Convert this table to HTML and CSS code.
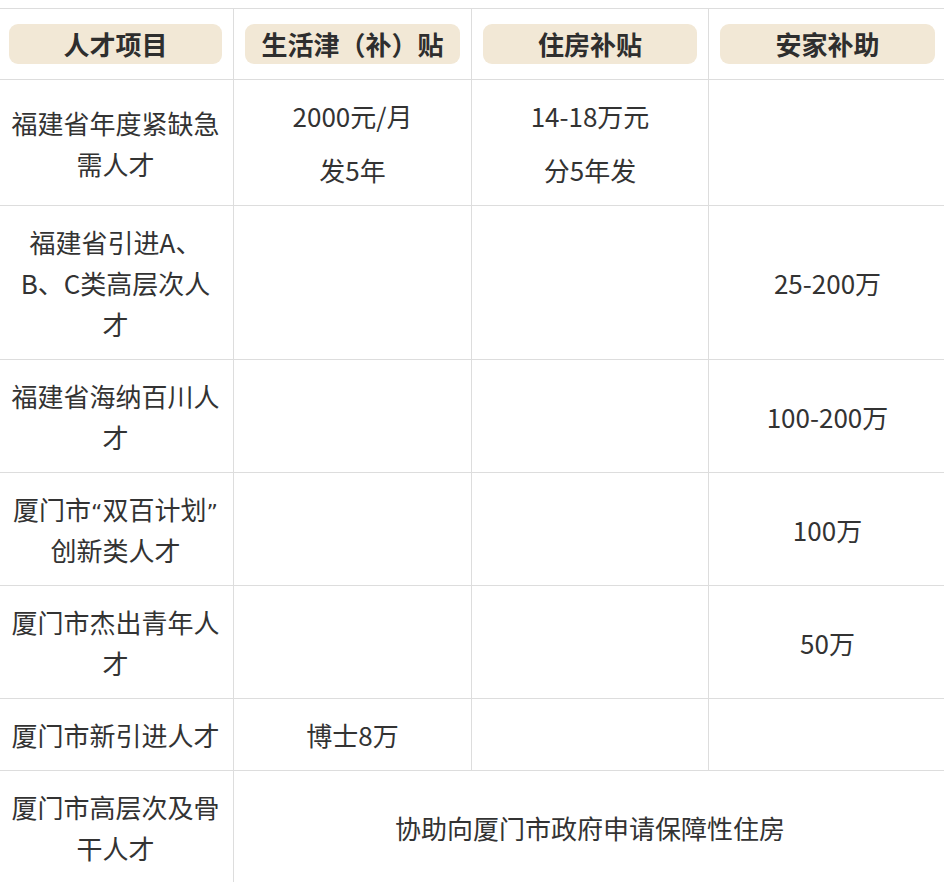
FILE: index.html
```html
<!DOCTYPE html>
<html lang="zh-CN">
<head>
<meta charset="utf-8">
<title>人才补贴</title>
<link rel="stylesheet" href="styles.css">
</head>
<body>
<div class="wrap">
<table class="policy">
  <colgroup><col class="c1"><col class="c2"><col class="c3"><col class="c4"></colgroup>
  <thead>
    <tr>
      <th><span class="pill">人才项目</span></th>
      <th><span class="pill">生活津（补）贴</span></th>
      <th><span class="pill">住房补贴</span></th>
      <th><span class="pill">安家补助</span></th>
    </tr>
  </thead>
  <tbody>
    <tr>
      <td>福建省年度紧缺急需人才</td>
      <td><p>2000元/月</p><p>发5年</p></td>
      <td><p>14-18万元</p><p>分5年发</p></td>
      <td></td>
    </tr>
    <tr>
      <td>福建省引进A、B、C类高层次人才</td>
      <td></td>
      <td></td>
      <td>25-200万</td>
    </tr>
    <tr>
      <td>福建省海纳百川人才</td>
      <td></td>
      <td></td>
      <td>100-200万</td>
    </tr>
    <tr>
      <td>厦门市<span class="q">“</span>双百计划<span class="q">”</span>创新类人才</td>
      <td></td>
      <td></td>
      <td>100万</td>
    </tr>
    <tr>
      <td>厦门市杰出青年人才</td>
      <td></td>
      <td></td>
      <td>50万</td>
    </tr>
    <tr>
      <td>厦门市新引进人才</td>
      <td>博士8万</td>
      <td></td>
      <td></td>
    </tr>
    <tr>
      <td>厦门市高层次及骨干人才</td>
      <td colspan="3">协助向厦门市政府申请保障性住房</td>
    </tr>
  </tbody>
</table>
</div>
</body>
</html>
```

FILE: styles.css
```css
html, body {
  margin: 0;
  padding: 0;
  background: #ffffff;
}

.wrap {
  width: 944px;
  overflow: hidden;
  padding-top: 8px;
}

.policy {
  width: 949px;
  margin-left: -3px;
  border-collapse: collapse;
  table-layout: fixed;
  font-family: "Noto Sans CJK SC", "Noto Sans", sans-serif;
  font-size: 26px;
  line-height: 41px;
  color: #333333;
}

.policy .c1 { width: 236px; }
.policy .c2 { width: 238px; }
.policy .c3 { width: 237px; }
.policy .c4 { width: 238px; }

.policy th,
.policy td {
  border: 1px solid #dddddd;
  padding: 15px 11px;
  text-align: center;
  vertical-align: middle;
  font-weight: 400;
}

.pill {
  display: block;
  height: 40px;
  line-height: 40px;
  background: #f2e8d6;
  border-radius: 9px;
  font-weight: 700;
  color: #2e2e2e;
}

.policy td p {
  margin: 0;
}

.policy td p + p {
  margin-top: 13px;
}

.q {
  font-family: "DejaVu Sans", sans-serif;
  font-size: 22px;
  line-height: 1;
}
```
